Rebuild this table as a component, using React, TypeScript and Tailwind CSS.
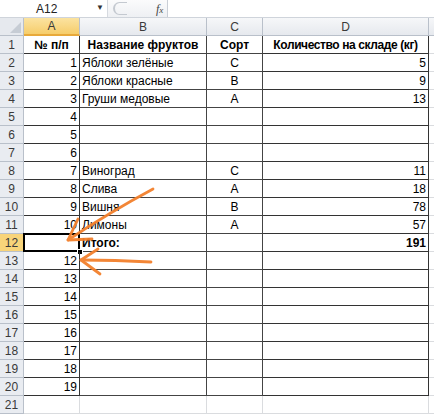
import React from 'react';

type RowData = { a?: string; b?: string; c?: string; d?: string; bold?: boolean };

const rows: RowData[] = [
  { a: '№ п/п', b: 'Название фруктов', c: 'Сорт', d: 'Количество на складе (кг)', bold: true },
  { a: '1', b: 'Яблоки зелёные', c: 'C', d: '5' },
  { a: '2', b: 'Яблоки красные', c: 'B', d: '9' },
  { a: '3', b: 'Груши медовые', c: 'A', d: '13' },
  { a: '4' },
  { a: '5' },
  { a: '6' },
  { a: '7', b: 'Виноград', c: 'C', d: '11' },
  { a: '8', b: 'Слива', c: 'A', d: '18' },
  { a: '9', b: 'Вишня', c: 'B', d: '78' },
  { a: '10', b: 'Лимоны', c: 'A', d: '57' },
  { b: 'Итого:', d: '191' },
  { a: '12' },
  { a: '13' },
  { a: '14' },
  { a: '15' },
  { a: '16' },
  { a: '17' },
  { a: '18' },
  { a: '19' },
];

function RowHead({ n, active }: { n: number; active?: boolean }) {
  return (
    <div
      className={
        'w-[24px] shrink-0 h-full flex items-center justify-center border-r border-b border-[#b9c0ca] text-[12px] text-[#3a3a3a] ' +
        (active ? 'bg-[#f8d47a]' : 'bg-[#e9ecf1]')
      }
    >
      {n}
    </div>
  );
}

function SheetRow({ n, r }: { n: number; r: RowData }) {
  const header = n === 1;
  const sel = n === 12;
  return (
    <div className="flex h-[18px]">
      <RowHead n={n} active={sel} />
      {/* A */}
      <div
        className={
          'relative w-[56px] shrink-0 h-full flex items-center px-[2px] border-r border-b border-[#333] ' +
          (header ? 'justify-center font-bold' : 'justify-end')
        }
      >
        {r.a}
        {sel && (
          <>
            <div className="absolute left-[-1px] top-[-1px] right-[-1px] bottom-[-1px] border-2 border-black" />
            <div className="absolute right-[-4px] bottom-[-4px] w-[6px] h-[6px] bg-black border border-white" />
          </>
        )}
      </div>
      {/* B */}
      <div
        className={
          'w-[127px] shrink-0 h-full flex items-center px-[2px] border-r border-b border-[#444] whitespace-nowrap ' +
          (header ? 'justify-center font-bold' : 'justify-start') +
          (sel ? ' font-bold' : '')
        }
      >
        {r.b}
      </div>
      {/* C */}
      <div
        className={
          'w-[56px] shrink-0 h-full flex items-center justify-center px-[2px] border-r border-b border-[#444] ' +
          (header ? 'font-bold' : '')
        }
      >
        {r.c}
      </div>
      {/* D */}
      <div
        className={
          'w-[166px] shrink-0 h-full flex items-center px-[2px] border-r border-b border-[#333] whitespace-nowrap ' +
          (header ? 'justify-center font-bold tracking-[-0.4px]' : 'justify-end') +
          (sel ? ' font-bold' : '')
        }
      >
        {r.d}
      </div>
      <div className="flex-1 h-full border-b border-[#dadcdf]" />
    </div>
  );
}

function EmptyRow({ n }: { n: number }) {
  return (
    <div className="flex h-[18px]">
      <RowHead n={n} />
      <div className="w-[56px] shrink-0 h-full border-r border-b border-[#dadcdf]" />
      <div className="w-[127px] shrink-0 h-full border-r border-b border-[#dadcdf]" />
      <div className="w-[56px] shrink-0 h-full border-r border-b border-[#dadcdf]" />
      <div className="w-[166px] shrink-0 h-full border-r border-b border-[#dadcdf]" />
      <div className="flex-1 h-full border-b border-[#dadcdf]" />
    </div>
  );
}

function ColHead({ label, w, active }: { label: string; w: string; active?: boolean }) {
  return (
    <div
      className={
        w +
        ' shrink-0 h-full flex items-center justify-center border-r border-[#b9c0ca] text-[12px] text-[#3a3a3a] ' +
        (active
          ? 'bg-gradient-to-b from-[#fbe3a0] to-[#f6cd6a] border-b-2 border-b-[#e8a93a]'
          : 'bg-gradient-to-b from-[#f6f7f9] to-[#e6e9ee] border-b border-b-[#b9c0ca]')
      }
    >
      {label}
    </div>
  );
}

function Arrows() {
  return (
    <svg className="absolute left-0 top-0 pointer-events-none" width="434" height="414">
      <g
        stroke="#f3802c"
        strokeWidth="2.8"
        strokeLinecap="round"
        strokeLinejoin="round"
        fill="none"
        opacity="0.95"
      >
        <path d="M153 189 Q110 212 68 240" />
        <path d="M78 219 L68 240 L92 239" />
        <path d="M151 262 Q115 260 81 260" />
        <path d="M98 249 L81 260 L100 274" />
      </g>
    </svg>
  );
}

export default function App() {
  return (
    <div
      className="relative w-[434px] h-[414px] overflow-hidden bg-white text-[12px] text-black"
      style={{ fontFamily: '"Liberation Sans", Arial, sans-serif' }}
    >
      {/* formula bar */}
      <div className="flex h-[18px] border-b border-[#cfd4db] bg-white">
        <div className="w-[108px] shrink-0 relative flex items-center border-r border-[#d6dae0]">
          <span className="ml-[36px] text-[12px] text-[#222]">A12</span>
          <span className="absolute right-[3px] top-[4px] text-[8px] leading-none text-[#333]">▼</span>
        </div>
        <div className="w-[60px] shrink-0 relative flex items-center bg-gradient-to-b from-[#fbfbfc] to-[#eef0f3] border-r border-[#c9ced6]">
          <div className="absolute left-[5px] top-[2px] w-[14px] h-[13px] rounded-l-full border-l-2 border-t border-b border-[#c4c9d0]" />
          <span
            className="absolute left-[48px] top-[0px] italic text-[12px] text-[#444]"
            style={{ fontFamily: '"Liberation Serif", serif' }}
          >
            f<span className="text-[9px]">x</span>
          </span>
        </div>
        <div className="flex-1" />
      </div>

      {/* column headers */}
      <div className="flex h-[18px]">
        <div className="relative w-[24px] shrink-0 h-full bg-[#e6e9ee] border-r border-b border-[#b9c0ca]">
          <div className="absolute right-[2px] bottom-[2px] w-0 h-0 border-l-[11px] border-l-transparent border-b-[11px] border-b-[#c6ccd4]" />
        </div>
        <ColHead label="A" w="w-[56px]" active />
        <ColHead label="B" w="w-[127px]" />
        <ColHead label="C" w="w-[56px]" />
        <ColHead label="D" w="w-[166px]" />
        <div className="flex-1 h-full bg-gradient-to-b from-[#f6f7f9] to-[#e6e9ee] border-b border-[#b9c0ca]" />
      </div>

      {rows.map((r, i) => (
        <SheetRow key={i} n={i + 1} r={r} />
      ))}
      <EmptyRow n={21} />

      <Arrows />
    </div>
  );
}
